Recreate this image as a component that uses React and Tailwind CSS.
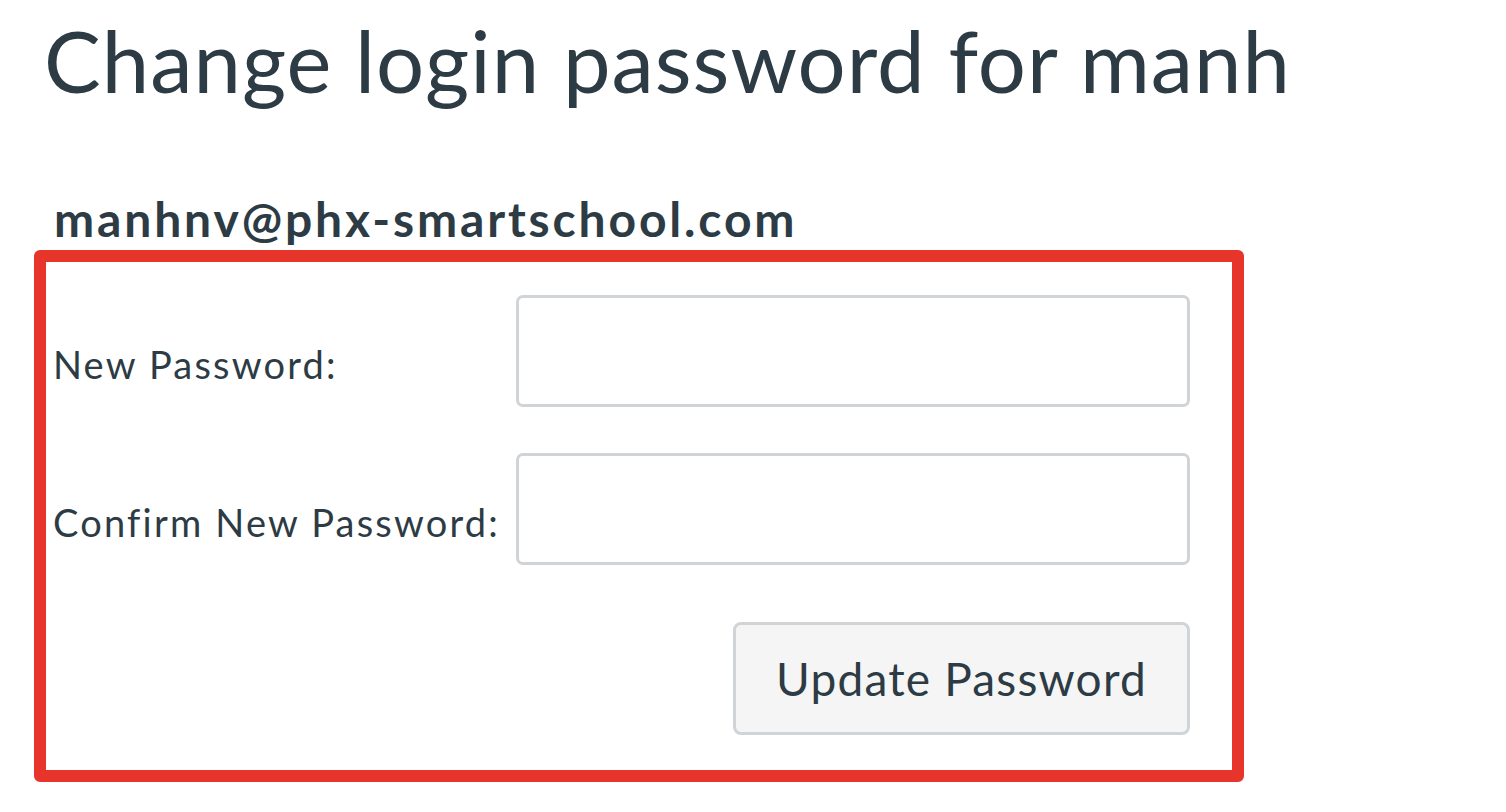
export default function App() {
  return (
    <div className="min-h-screen bg-white pl-[44px] pt-[18px] text-[#2d3b45]" style={{ fontFamily: "Lato, 'Open Sans', sans-serif" }}>
      <h1 className="text-[85px] font-normal leading-none tracking-[1px]">Change login password for manh</h1>

      <div className="mt-[92px] pl-[10px] text-[48px] font-bold leading-none tracking-[2.85px]">manhnv@phx-smartschool.com</div>

      <div className="mt-[7px] -ml-[10px] w-[1210px] h-[532px] rounded-[6px] border-[12px] border-[#e8352b] pt-[33px] pl-[7px]">
        <div className="flex flex-col gap-[46px]">
          <div className="flex items-start">
            <label className="w-[463px] mt-[50px] text-[38px] leading-none tracking-[2.2px]">New Password:</label>
            <input type="password" className="w-[674px] h-[112px] rounded-[7px] border-[3px] border-[#d0d4d7] bg-white outline-none" />
          </div>
          <div className="flex items-start">
            <label className="w-[463px] mt-[50px] text-[38px] leading-none tracking-[2.2px] whitespace-nowrap">Confirm New Password:</label>
            <input type="password" className="w-[674px] h-[112px] rounded-[7px] border-[3px] border-[#d0d4d7] bg-white outline-none" />
          </div>
        </div>
        <div className="flex justify-end w-[1137px] mt-[57px]">
          <button className="w-[457px] h-[113px] rounded-[8px] border-[3px] border-[#d0d4d7] bg-[#f5f5f5] text-[46px] leading-none tracking-[1.2px] text-[#2d3b45]">
            Update Password
          </button>
        </div>
      </div>
    </div>
  )
}
